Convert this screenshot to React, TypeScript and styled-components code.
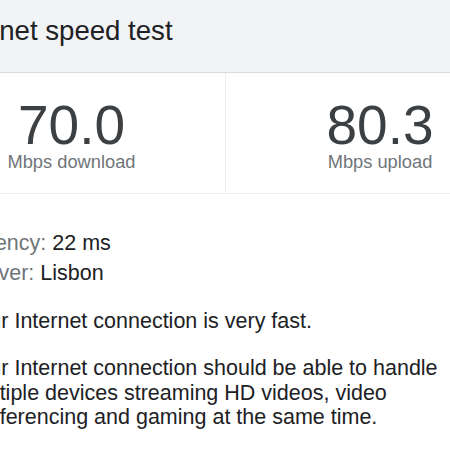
import React from "react";
import styled, { createGlobalStyle } from "styled-components";

const Global = createGlobalStyle`
  html, body { margin: 0; padding: 0; background: #ffffff; }
  body { font-family: "Liberation Sans", Arial, sans-serif; overflow: hidden; }
`;

const Viewport = styled.div`
  width: 450px;
  height: 450px;
  overflow: hidden;
  background: #ffffff;
`;

const Card = styled.div`
  width: 616px;
  margin-left: -82px;
`;

const Header = styled.div`
  height: 73px;
  box-sizing: border-box;
  padding: 15px 0 0 26px;
  background: #f1f3f4;
  border-bottom: 1px solid #dadce0;
`;

const Title = styled.h1`
  margin: 0;
  font-size: 27.6px;
  line-height: 31px;
  font-weight: 400;
  color: #202124;
`;

const Stats = styled.div`
  display: grid;
  grid-template-columns: 1fr 1fr;
  border-bottom: 1px solid #eeeeee;
`;

const Stat = styled.div<{ $divider?: boolean }>`
  display: flex;
  flex-direction: column;
  align-items: center;
  padding: 26px 0 21px;
  border-right: ${(p) => (p.$divider ? "1px solid #eeeeee" : "none")};
`;

const Value = styled.div`
  font-size: 55px;
  line-height: 52px;
  color: #3c4043;
`;

const Unit = styled.div`
  margin-top: 1px;
  font-size: 18.3px;
  line-height: 20px;
  color: #70757a;
`;

const Body = styled.div`
  padding: 34px 47px 0 47px;
  font-size: 21.5px;
  color: #202124;
`;

const InfoRow = styled.div`
  line-height: 30px;
`;

const Label = styled.span`
  color: #70757a;
`;

const Para = styled.p<{ $gap: number }>`
  margin: ${(p) => p.$gap}px 0 0;
  line-height: 24.3px;
`;

export default function App() {
  return (
    <Viewport>
      <Global />
      <Card>
        <Header>
          <Title>Internet speed test</Title>
        </Header>
        <Stats>
          <Stat $divider>
            <Value>70.0</Value>
            <Unit>Mbps download</Unit>
          </Stat>
          <Stat>
            <Value>80.3</Value>
            <Unit>Mbps upload</Unit>
          </Stat>
        </Stats>
        <Body>
          <InfoRow>
            <Label>Latency:</Label> 22 ms
          </InfoRow>
          <InfoRow>
            <Label>Server:</Label> Lisbon
          </InfoRow>
          <Para $gap={21}>Your Internet connection is very fast.</Para>
          <Para $gap={23}>
            Your Internet connection should be able to handle multiple devices
            streaming HD videos, video conferencing and gaming at the same time.
          </Para>
        </Body>
      </Card>
    </Viewport>
  );
}
